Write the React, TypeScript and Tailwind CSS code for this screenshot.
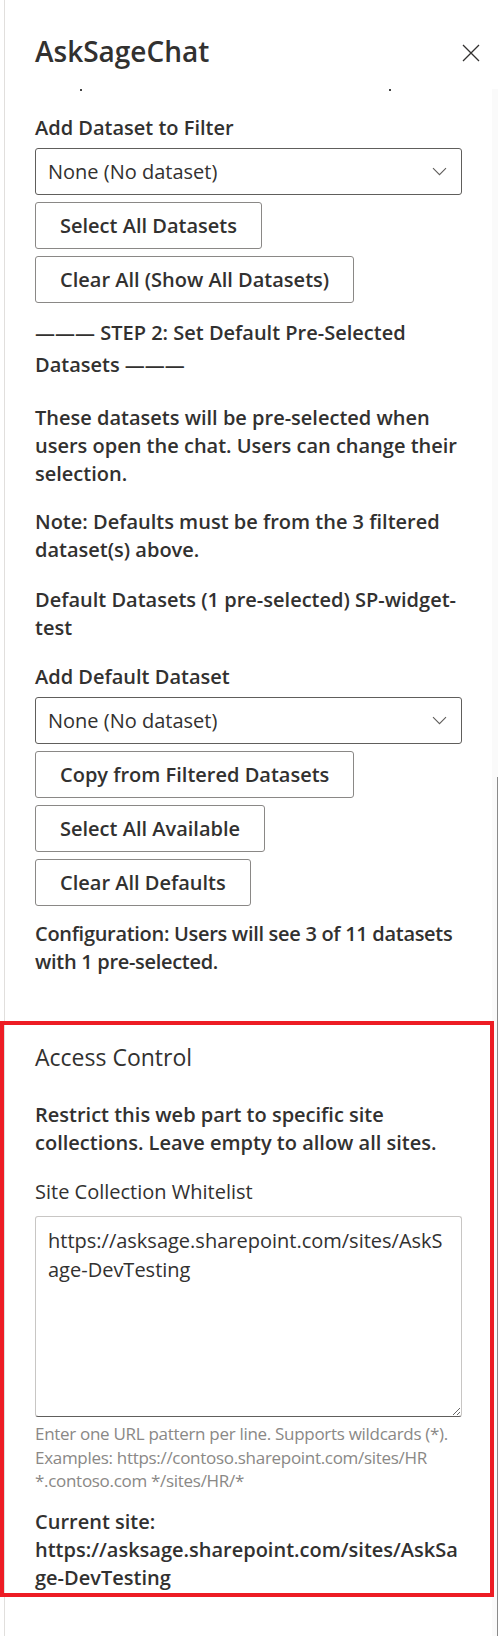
import React from "react";

const FONT = "font-['Segoe_UI','Open_Sans',sans-serif]";

function Chevron() {
  return (
    <svg width="15" height="9" viewBox="0 0 15 9" fill="none" aria-hidden>
      <path d="M1 1.2l6.5 6.5L14 1.2" stroke="#605e5c" strokeWidth="1.1" />
    </svg>
  );
}

function Dropdown({ value }: { value: string }) {
  return (
    <div className="flex h-[47px] w-full items-center justify-between rounded-[3px] border border-[#605e5c] bg-white pl-[12px] pr-[14px]">
      <span className="text-[20px] leading-[28px]">{value}</span>
      <Chevron />
    </div>
  );
}

function ActionButton({ children }: { children: React.ReactNode }) {
  return (
    <button
      type="button"
      className="mt-[7px] flex h-[47px] items-center self-start rounded-[3px] border border-[#8a8886] bg-white px-[24px] text-[20px] font-semibold leading-[28px] text-[#323130]"
    >
      {children}
    </button>
  );
}

function FieldLabel({ children }: { children: React.ReactNode }) {
  return <label className="mb-[6px] block text-[20px] font-semibold leading-[28px]">{children}</label>;
}

export default function App() {
  return (
    <div className={`h-screen overflow-hidden bg-white pl-[4px] text-[#323130] ${FONT}`}>
      <div className="flex h-full flex-col border-l border-[#e1dfdd]">
        <header className="flex h-[89px] shrink-0 items-start justify-between pl-[30px] pr-[18px] pt-[33px]">
          <h1 className="text-[28px] font-semibold leading-[36px]">AskSageChat</h1>
          <button type="button" aria-label="Close" className="mt-[11px] block h-[18px] w-[18px]">
            <svg className="block" width="18" height="18" viewBox="0 0 18 18" fill="none">
              <path d="M1 1l16 16M17 1L1 17" stroke="#323130" strokeWidth="1.3" />
            </svg>
          </button>
        </header>

        <div className="flex min-h-0 flex-1">
          <main className="min-w-0 flex-1 px-[30px]">
            {/* bottoms of the line scrolled under the header */}
            <div className="flex h-[2px]">
              <span className="ml-[45px] h-[2px] w-[2px] bg-[#444]" />
              <span className="ml-[307px] h-[2px] w-[2px] bg-[#444]" />
            </div>

            <div className="mt-[23px] flex flex-col">
              <FieldLabel>Add Dataset to Filter</FieldLabel>
              <Dropdown value="None (No dataset)" />
              <ActionButton>Select All Datasets</ActionButton>
              <ActionButton>Clear All (Show All Datasets)</ActionButton>
            </div>

            <p className="mt-[14px] text-[20px] font-semibold leading-[32px]">
              ——— STEP 2: Set Default Pre-Selected Datasets ———
            </p>
            <p className="mt-[23px] text-[20px] font-semibold leading-[28px]">
              These datasets will be pre-selected when users open the chat. Users can change their selection.
            </p>
            <p className="mt-[20px] text-[20px] font-semibold leading-[28px]">
              Note: Defaults must be from the 3 filtered dataset(s) above.
            </p>
            <p className="mt-[22px] text-[20px] font-semibold leading-[28px]">
              Default Datasets (1 pre-selected) SP-widget-test
            </p>

            <div className="mt-[21px] flex flex-col">
              <FieldLabel>Add Default Dataset</FieldLabel>
              <Dropdown value="None (No dataset)" />
              <ActionButton>Copy from Filtered Datasets</ActionButton>
              <ActionButton>Select All Available</ActionButton>
              <ActionButton>Clear All Defaults</ActionButton>
            </div>

            <p className="mt-[14px] text-[20px] font-semibold leading-[28px] tracking-[-0.3px]">
              Configuration: Users will see 3 of 11 datasets with 1 pre-selected.
            </p>

            <section className="relative z-10 -ml-[35px] -mr-[32px] mt-[45px] border-4 border-[#ed1c24] pb-[1px] pl-[31px] pr-[28px] pt-[16px]">
              <h2 className="text-[23px] leading-[32px]">Access Control</h2>
              <p className="mt-[28px] text-[20px] font-semibold leading-[28px]">
                Restrict this web part to specific site collections. Leave empty to allow all sites.
              </p>
              <label className="mt-[21px] block text-[20px] leading-[28px]">Site Collection Whitelist</label>
              <textarea
                className="mt-[10px] block h-[201px] w-full resize-y rounded-[3px] border border-[#c8c6c4] border-b-[#605e5c] bg-white px-[12px] pt-[9px] text-[20px] leading-[29px] text-[#323130] outline-none"
                defaultValue="https://asksage.sharepoint.com/sites/AskSage-DevTesting"
              />
              <p className="mt-[5px] text-[17px] leading-[23.5px] tracking-[-0.3px] text-[#8a8886]">
                Enter one URL pattern per line. Supports wildcards (*). Examples: https://contoso.sharepoint.com/sites/HR
                *.contoso.com */sites/HR/*
              </p>
              <p className="mt-[15px] break-words text-[20px] font-semibold leading-[28px]">
                Current site: https://asksage.sharepoint.com/sites/AskSage-DevTesting
              </p>
            </section>
          </main>

          <div className="flex w-[6px] flex-col bg-[#fafafa]">
            <div className="h-[688px] shrink-0" />
            <div className="flex-1 border-r border-[#8a8a8a]" />
          </div>
        </div>
      </div>
    </div>
  );
}
